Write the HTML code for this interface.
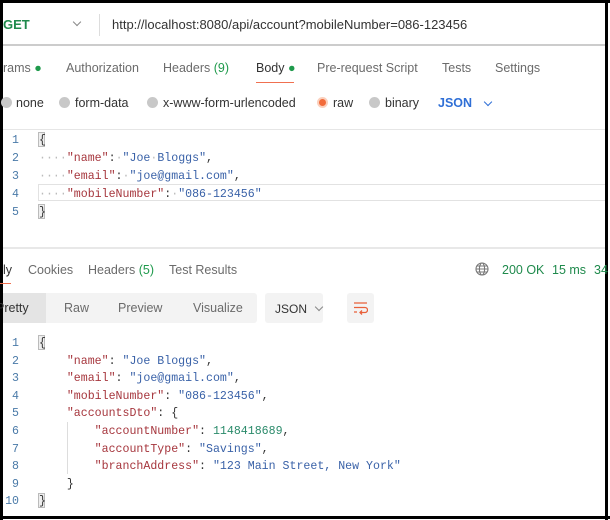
<!DOCTYPE html>
<html><head><style>
*{margin:0;padding:0;box-sizing:border-box}
body{width:610px;height:520px;background:#fff;position:relative;overflow:hidden;font-family:"Liberation Sans",sans-serif;font-size:12.5px;color:#6b6b6b}
.a{position:absolute;white-space:pre}
.m{font-family:"Liberation Mono",monospace;font-size:11.6px}
.k{color:#a6363d}.s{color:#3a62a8}.n{color:#2a8a6a}.ln{color:#4a7aa8}
.dot{color:#bbb}
.rad{position:absolute;width:11px;height:11px;border-radius:50%;background:#c8c8c8}
.chev{position:absolute;width:6px;height:6px;border-right:1.2px solid #888;border-bottom:1.2px solid #888;transform:rotate(45deg)}
</style></head><body>
<div class="a" style="left:0;top:0;width:610px;height:3px;background:#000"></div>
<div class="a" style="left:0;top:0;width:3px;height:520px;background:#000"></div>
<div class="a" style="left:605px;top:0;width:3px;height:520px;background:#000"></div>
<div class="a" style="left:0;top:516px;width:610px;height:3px;background:#000"></div>

<div class="a" style="left:3px;top:17px;color:#1f8a4c;font-weight:bold;font-size:13px">GET</div>
<div class="chev" style="left:74px;top:19px"></div>
<div class="a" style="left:99px;top:14px;width:1px;height:22px;background:#ddd"></div>
<div class="a" style="left:112px;top:17px;font-size:13px;color:#333">http://localhost:8080/api/account?mobileNumber=086-123456</div>
<div class="a" style="left:3px;top:44px;width:602px;height:2px;background:#ccc"></div>

<div class="a" style="left:3px;top:61px">rams <span style="color:#1f9a4c">●</span></div>
<div class="a" style="left:66px;top:61px">Authorization</div>
<div class="a" style="left:163px;top:61px">Headers <span style="color:#1f9a4c">(9)</span></div>
<div class="a" style="left:256px;top:61px;color:#333">Body <span style="color:#1f9a4c">●</span></div>
<div class="a" style="left:256px;top:82px;width:38px;height:1px;background:#f07050"></div>
<div class="a" style="left:317px;top:61px">Pre-request Script</div>
<div class="a" style="left:442px;top:61px">Tests</div>
<div class="a" style="left:495px;top:61px">Settings</div>

<div class="rad" style="left:1px;top:97px"></div><div class="a" style="left:16px;top:96px;color:#333">none</div>
<div class="rad" style="left:59px;top:97px"></div><div class="a" style="left:75px;top:96px;color:#333">form-data</div>
<div class="rad" style="left:147px;top:97px"></div><div class="a" style="left:163px;top:96px;color:#333">x-www-form-urlencoded</div>
<div class="rad" style="left:317px;top:97px;background:#f26b3a;border:2px solid #fbd0bd"></div><div class="a" style="left:333px;top:96px;color:#333">raw</div>
<div class="rad" style="left:369px;top:97px"></div><div class="a" style="left:385px;top:96px;color:#333">binary</div>
<div class="a" style="left:438px;top:96px;color:#2f6fd6;font-weight:bold">JSON</div>
<div class="chev" style="left:485px;top:99px;border-color:#2f6fd6"></div>

<div class="a" style="left:3px;top:129px;width:602px;height:1px;background:#e6e6e6"></div>
<div class="a" style="left:38px;top:184px;width:567px;height:17px;border:1px solid #e2e2e2;border-right:none"></div>
<div class="a m ln" style="left:12px;top:132px;line-height:18px">1
2
3
4
5</div>
<div class="a" style="left:38px;top:132px;width:7px;height:15px;border:1px solid #bbb;background:#eee"></div>
<div class="a" style="left:38px;top:204px;width:7px;height:15px;border:1px solid #bbb;background:#eee"></div>
<div class="a m" style="left:39px;top:132px;line-height:18px;color:#333">{
<span class="dot">····</span><span class="k">"name"</span>:<span class="dot">·</span><span class="s">"Joe<span class="dot">·</span>Bloggs"</span>,
<span class="dot">····</span><span class="k">"email"</span>:<span class="dot">·</span><span class="s">"joe@gmail.com"</span>,
<span class="dot">····</span><span class="k">"mobileNumber"</span>:<span class="dot">·</span><span class="s">"086-123456"</span>
}</div>

<div class="a" style="left:3px;top:247px;width:602px;height:2px;background:#e8e8e8"></div>

<div class="a" style="left:3px;top:263px;color:#333">ly</div>
<div class="a" style="left:0;top:283px;width:11px;height:1px;background:#f07050"></div>
<div class="a" style="left:28px;top:263px">Cookies</div>
<div class="a" style="left:88px;top:263px">Headers <span style="color:#1f9a4c">(5)</span></div>
<div class="a" style="left:169px;top:263px">Test Results</div>
<svg class="a" style="left:475px;top:262px" width="14" height="14" viewBox="0 0 14 14" fill="none" stroke="#777" stroke-width="1.1"><circle cx="7" cy="7" r="6"/><ellipse cx="7" cy="7" rx="2.6" ry="6"/><path d="M1 7h12M2 4h10M2 10h10"/></svg>
<div class="a" style="left:502px;top:263px;color:#1f8a4c">200 OK</div>
<div class="a" style="left:552px;top:263px;color:#1f8a4c">15 ms</div>
<div class="a" style="left:594px;top:263px;color:#1f8a4c">34</div>

<div class="a" style="left:3px;top:293px;width:254px;height:30px;background:#f3f3f3;border-radius:3px"></div>
<div class="a" style="left:3px;top:293px;width:43px;height:30px;background:#e4e4e4"></div>
<div class="a" style="left:-4px;top:301px;color:#333">Pretty</div>
<div class="a" style="left:64px;top:301px">Raw</div>
<div class="a" style="left:118px;top:301px">Preview</div>
<div class="a" style="left:193px;top:301px">Visualize</div>
<div class="a" style="left:265px;top:293px;width:58px;height:30px;background:#f3f3f3;border-radius:3px"></div>
<div class="a" style="left:275px;top:302px;color:#333;font-size:12px">JSON</div>
<div class="chev" style="left:316px;top:304px"></div>
<div class="a" style="left:347px;top:293px;width:27px;height:30px;background:#f3f3f3;border-radius:3px"></div>
<svg class="a" style="left:353px;top:301px" width="15" height="14" viewBox="0 0 15 14" fill="none" stroke="#e8603a" stroke-width="1.3"><path d="M1 2h13M1 6.5h11a2.5 2.5 0 0 1 0 5H7M9 9.5l-2 2 2 2M1 11h3"/></svg>

<div class="a m ln" style="left:11px;top:335px;line-height:17.6px;text-align:right;width:8px;direction:rtl">1
2
3
4
5
6
7
8
9
10</div>
<div class="a" style="left:38px;top:335px;width:7px;height:15px;border:1px solid #bbb;background:#eee"></div>
<div class="a" style="left:38px;top:493px;width:7px;height:15px;border:1px solid #bbb;background:#eee"></div>
<div class="a" style="left:67px;top:422px;width:1px;height:52px;background:#ddd"></div>
<div class="a m" style="left:39px;top:335px;line-height:17.6px;color:#333">{
    <span class="k">"name"</span>: <span class="s">"Joe Bloggs"</span>,
    <span class="k">"email"</span>: <span class="s">"joe@gmail.com"</span>,
    <span class="k">"mobileNumber"</span>: <span class="s">"086-123456"</span>,
    <span class="k">"accountsDto"</span>: {
        <span class="k">"accountNumber"</span>: <span class="n">1148418689</span>,
        <span class="k">"accountType"</span>: <span class="s">"Savings"</span>,
        <span class="k">"branchAddress"</span>: <span class="s">"123 Main Street, New York"</span>
    }
}</div>
</body></html>
